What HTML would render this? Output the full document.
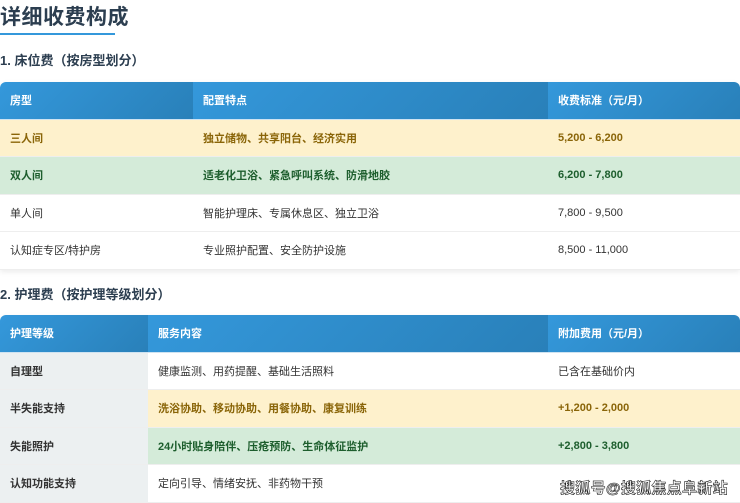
<!DOCTYPE html>
<html><head><meta charset="utf-8"><style>
*{margin:0;padding:0;box-sizing:border-box}
body{width:740px;height:502px;overflow:hidden;background:#fff;font-family:"Liberation Sans","Noto Sans CJK SC",sans-serif;color:#333;position:relative}
h1{position:absolute;left:0;top:1px;font-size:21px;font-weight:bold;color:#2c3e50;letter-spacing:0.5px}
.ul{position:absolute;left:0;top:33px;width:115px;height:2px;background:#3498db}
h2{position:absolute;left:0;font-size:13px;font-weight:bold;color:#2c3e50}
table{position:absolute;left:0;width:740px;border-collapse:collapse;font-size:11px;box-shadow:0 2px 6px rgba(0,0,0,0.08);border-radius:6px 6px 0 0;overflow:hidden}
th{background:linear-gradient(135deg,#3498db,#2980b9);color:#fff;font-weight:bold;text-align:left;padding-left:10px;height:37px;border-bottom:1px solid #cfe3f1}
td{padding-left:10px;height:37.5px;border-bottom:1px solid #eee}
.y td{background:#fef1cc;color:#8a6508;font-weight:bold}
.g td{background:#d4ebd9;color:#1d5e2d;font-weight:bold}
td.f{background:#ecf0f1!important;color:#333!important;font-weight:bold!important}
.wm{position:absolute;left:560px;top:477px;font-size:15px;color:#fff;font-weight:bold;-webkit-text-stroke:0.6px #222;letter-spacing:0.3px}
</style></head><body>
<h1>详细收费构成</h1>
<div class="ul"></div>
<h2 style="top:50px">1. 床位费（按房型划分）</h2>
<table style="top:82px">
<tr><th style="width:193px">房型</th><th style="width:355px">配置特点</th><th>收费标准（元/月）</th></tr>
<tr class="y"><td>三人间</td><td>独立储物、共享阳台、经济实用</td><td>5,200 - 6,200</td></tr>
<tr class="g"><td>双人间</td><td>适老化卫浴、紧急呼叫系统、防滑地胶</td><td>6,200 - 7,800</td></tr>
<tr><td>单人间</td><td>智能护理床、专属休息区、独立卫浴</td><td>7,800 - 9,500</td></tr>
<tr><td>认知症专区/特护房</td><td>专业照护配置、安全防护设施</td><td>8,500 - 11,000</td></tr>
</table>
<h2 style="top:284px">2. 护理费（按护理等级划分）</h2>
<table style="top:315px">
<tr><th style="width:148px">护理等级</th><th style="width:400px">服务内容</th><th>附加费用（元/月）</th></tr>
<tr><td class="f">自理型</td><td>健康监测、用药提醒、基础生活照料</td><td>已含在基础价内</td></tr>
<tr class="y"><td class="f">半失能支持</td><td>洗浴协助、移动协助、用餐协助、康复训练</td><td>+1,200 - 2,000</td></tr>
<tr class="g"><td class="f">失能照护</td><td>24小时贴身陪伴、压疮预防、生命体征监护</td><td>+2,800 - 3,800</td></tr>
<tr><td class="f">认知功能支持</td><td>定向引导、情绪安抚、非药物干预</td><td></td></tr>
</table>
<div class="wm">搜狐号@搜狐焦点阜新站</div>
</body></html>
